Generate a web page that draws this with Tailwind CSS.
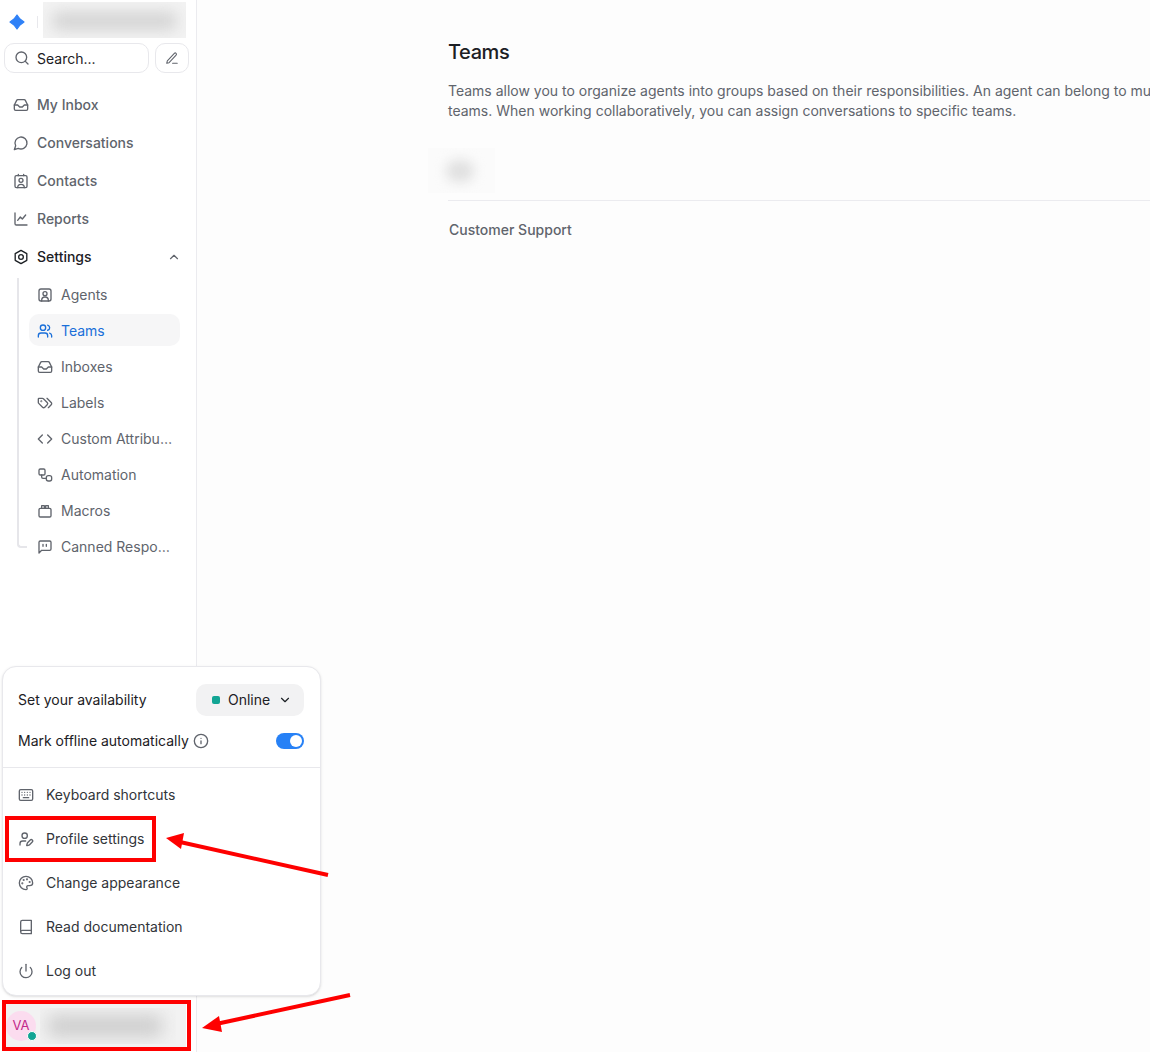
<!DOCTYPE html>
<html lang="en">
<head>
    <meta charset="UTF-8">
    <title>Teams</title>
    <script src="https://cdn.jsdelivr.net/npm/@tailwindcss/browser@4"></script>
</head>
<body class="bg-[#fdfdfd] font-['Inter',sans-serif]">
    <div class="relative flex w-[1150px] h-[1052px] overflow-hidden">
        <!-- sidebar -->
        <aside class="w-[197px] shrink-0 h-full bg-white border-r border-[#ebebef] flex flex-col">
            <div class="flex items-center h-[38px] pt-px pl-[9px]">
                <svg class="w-4 h-4 mt-[5px] text-[#2f81f7]" viewBox="0 0 16 16" fill="currentColor"><path d="M8 1 11 5 15 8 11 11 8 15 5 11 1 8 5 5Z" stroke="currentColor" stroke-width="1.2" stroke-linejoin="round"/></svg>
                <div class="w-px h-[12px] mt-[5px] bg-[#e8e8ec] ml-[12px]"></div>
                <div class="ml-[5px] w-[143px] h-[36px] bg-[#f3f3f3] overflow-hidden">
                    <div class="mt-[11px] mx-[10px] h-[16px] bg-[#cfcfcf] blur-[8px]"></div>
                </div>
            </div>
            <div class="flex gap-[6px] ml-1 mt-[5px]">
                <div class="w-[145px] h-[30px] border border-[#e8e8ec] rounded-[10px] flex items-center pl-[9px] gap-[7px] text-sm text-[#1c2024]">
                    <svg class="w-4 h-4 text-[#60646c]" viewBox="0 0 24 24" fill="none" stroke="currentColor" stroke-width="2" stroke-linecap="round"><circle cx="11" cy="11" r="8"/><path d="m21 21-4.3-4.3"/></svg>
                    <span class="mt-px">Search...</span>
                </div>
                <div class="w-[34px] h-[30px] border border-[#e8e8ec] rounded-[10px] flex items-center justify-center">
                    <svg class="w-[14px] h-[14px] text-[#60646c]" viewBox="0 0 24 24" fill="none" stroke="currentColor" stroke-width="1.8" stroke-linecap="round" stroke-linejoin="round"><path d="M4 17 16 4a2.1 2.1 0 0 1 3 3L7 20l-4 1z"/><path d="M13 21h8"/></svg>
                </div>
            </div>
            <nav class="mt-[13px] text-sm font-medium text-[#60646c]">
                <div class="h-[38px] flex items-center pl-[13px] gap-[8px]">
                    <svg class="w-4 h-4" viewBox="0 0 24 24" fill="none" stroke="currentColor" stroke-width="2" stroke-linecap="round" stroke-linejoin="round"><path d="m2 12 3.5-6.9A2 2 0 0 1 7.2 4h9.6a2 2 0 0 1 1.7 1.1L22 12v6a2 2 0 0 1-2 2H4a2 2 0 0 1-2-2z"/><path d="M2 12h5l3 3h4l3-3h5"/></svg>
                    My Inbox
                </div>
                <div class="h-[38px] flex items-center pl-[13px] gap-[8px]">
                    <svg class="w-4 h-4" viewBox="0 0 24 24" fill="none" stroke="currentColor" stroke-width="2" stroke-linecap="round" stroke-linejoin="round"><path d="M7.9 20A9 9 0 1 0 4 16.1L2 22Z"/></svg>
                    Conversations
                </div>
                <div class="h-[38px] flex items-center pl-[13px] gap-[8px]">
                    <svg class="w-4 h-4" viewBox="0 0 24 24" fill="none" stroke="currentColor" stroke-width="2" stroke-linecap="round" stroke-linejoin="round"><rect x="3" y="4" width="18" height="18" rx="2"/><path d="M8 2v2M16 2v2"/><circle cx="12" cy="11" r="3"/><path d="M7 22c0-3 2-5 5-5s5 2 5 5"/></svg>
                    Contacts
                </div>
                <div class="h-[38px] flex items-center pl-[13px] gap-[8px]">
                    <svg class="w-4 h-4" viewBox="0 0 24 24" fill="none" stroke="currentColor" stroke-width="2" stroke-linecap="round" stroke-linejoin="round"><path d="M3 3v16a2 2 0 0 0 2 2h16"/><path d="m7 14 4-5 3 3 5-6"/></svg>
                    Reports
                </div>
                <div class="h-[38px] flex items-center pl-[13px] gap-[8px] text-[#1c2024]">
                    <svg class="w-4 h-4" viewBox="0 0 24 24" fill="none" stroke="currentColor" stroke-width="2" stroke-linejoin="round"><path d="M12 2l8.7 5v10L12 22l-8.7-5V7z"/><circle cx="12" cy="12" r="3.5"/></svg>
                    Settings
                    <svg class="w-[14px] h-[14px] ml-auto mr-[15px] text-[#60646c]" viewBox="0 0 24 24" fill="none" stroke="currentColor" stroke-width="2" stroke-linecap="round" stroke-linejoin="round"><path d="m6 15 6-6 6 6"/></svg>
                </div>
                <!-- settings children -->
                <div class="relative mt-px font-normal">
                    <div class="absolute left-[17px] top-[1px] h-[270px] w-[10px] border-l-2 border-b-2 border-[#e6e6ea] rounded-bl-[4px]"></div>
                    <div class="h-[36px] flex items-center pl-[37px] gap-[8px]">
                        <svg class="w-4 h-4" viewBox="0 0 24 24" fill="none" stroke="currentColor" stroke-width="2" stroke-linecap="round" stroke-linejoin="round"><rect x="3" y="3" width="18" height="18" rx="3"/><circle cx="12" cy="10" r="3"/><path d="M7 21v-1a5 5 0 0 1 10 0v1"/></svg>
                        Agents
                    </div>
                    <div class="h-[36px] pt-px pl-[29px] pr-[16px]">
                        <div class="h-[32px] pt-[2px] rounded-[10px] bg-[#f6f6f7] text-[#1a6fd9] flex items-center pl-[8px] gap-[8px]">
                            <svg class="w-4 h-4" viewBox="0 0 24 24" fill="none" stroke="currentColor" stroke-width="2" stroke-linecap="round" stroke-linejoin="round"><path d="M16 21v-2a4 4 0 0 0-4-4H6a4 4 0 0 0-4 4v2"/><circle cx="9" cy="7" r="4"/><path d="M22 21v-2a4 4 0 0 0-3-3.87"/><path d="M16 3.13a4 4 0 0 1 0 7.75"/></svg>
                            Teams
                        </div>
                    </div>
                    <div class="h-[36px] flex items-center pl-[37px] gap-[8px]">
                        <svg class="w-4 h-4" viewBox="0 0 24 24" fill="none" stroke="currentColor" stroke-width="2" stroke-linecap="round" stroke-linejoin="round"><path d="m2 12 3.5-6.9A2 2 0 0 1 7.2 4h9.6a2 2 0 0 1 1.7 1.1L22 12v6a2 2 0 0 1-2 2H4a2 2 0 0 1-2-2z"/><path d="M2 12h5l3 3h4l3-3h5"/></svg>
                        Inboxes
                    </div>
                    <div class="h-[36px] flex items-center pl-[37px] gap-[8px]">
                        <svg class="w-4 h-4" viewBox="0 0 24 24" fill="none" stroke="currentColor" stroke-width="2" stroke-linecap="round" stroke-linejoin="round"><path d="m15 5 6.3 6.3a2.4 2.4 0 0 1 0 3.4L17 19"/><path d="M9.586 5.586A2 2 0 0 0 8.172 5H3a1 1 0 0 0-1 1v5.172a2 2 0 0 0 .586 1.414L8.29 18.29a2.426 2.426 0 0 0 3.42 0l3.58-3.58a2.426 2.426 0 0 0 0-3.42z"/><circle cx="6.5" cy="9.5" r=".5"/></svg>
                        Labels
                    </div>
                    <div class="h-[36px] flex items-center pl-[37px] gap-[8px]">
                        <svg class="w-4 h-4" viewBox="0 0 24 24" fill="none" stroke="currentColor" stroke-width="2" stroke-linecap="round" stroke-linejoin="round"><path d="m16 18 6-6-6-6"/><path d="m8 6-6 6 6 6"/></svg>
                        <span class="w-[112px] truncate">Custom Attributes</span>
                    </div>
                    <div class="h-[36px] flex items-center pl-[37px] gap-[8px]">
                        <svg class="w-4 h-4" viewBox="0 0 24 24" fill="none" stroke="currentColor" stroke-width="2" stroke-linecap="round" stroke-linejoin="round"><rect x="3" y="3" width="9" height="9" rx="2"/><rect x="14" y="13" width="8" height="8" rx="3"/><path d="M7 12v3a2 2 0 0 0 2 2h5"/></svg>
                        Automation
                    </div>
                    <div class="h-[36px] flex items-center pl-[37px] gap-[8px]">
                        <svg class="w-4 h-4" viewBox="0 0 24 24" fill="none" stroke="currentColor" stroke-width="2" stroke-linecap="round" stroke-linejoin="round"><rect x="3" y="8" width="18" height="13" rx="2"/><path d="M7 8V4h4v4M13 8V4h4v4"/></svg>
                        Macros
                    </div>
                    <div class="h-[36px] flex items-center pl-[37px] gap-[8px]">
                        <svg class="w-4 h-4" viewBox="0 0 24 24" fill="none" stroke="currentColor" stroke-width="2" stroke-linecap="round" stroke-linejoin="round"><path d="M21 15a2 2 0 0 1-2 2H7l-4 4V5a2 2 0 0 1 2-2h14a2 2 0 0 1 2 2z"/><path d="M9 8v3M14 8v3"/></svg>
                        <span class="w-[112px] truncate">Canned Responses</span>
                    </div>
                </div>
            </nav>
            <!-- account row -->
            <div class="mt-auto mb-[5px] ml-[6px] w-[180px] h-[43px] bg-[#f2f2f2] flex items-center">
                <div class="relative w-[30px] h-[30px] rounded-full bg-[#fbdcef] text-[#c2298a] text-[13px] flex items-center justify-center">
                    VA
                    <span class="absolute -right-[1px] bottom-0 w-[10px] h-[10px] rounded-full bg-[#12a594] border border-white"></span>
                </div>
                <div class="ml-[4px] w-[136px] h-[36px] overflow-hidden">
                    <div class="mt-[8px] ml-[8px] mr-[14px] h-[20px] bg-[#cacaca] blur-[9px]"></div>
                </div>
            </div>
        </aside>

        <!-- main content -->
        <main class="flex-1 min-w-0 pl-[251px] pt-[40px]">
            <h1 class="text-xl font-medium tracking-[-0.4px] leading-[24px] text-[#1c2024]">Teams</h1>
            <p class="mt-[17px] text-sm leading-[20px] text-[#60646c] whitespace-nowrap">Teams allow you to organize agents into groups based on their responsibilities. An agent can belong to multiple<br>teams. When working collaboratively, you can assign conversations to specific teams.</p>
            <div class="-ml-[20px] mt-[27px] w-[67px] h-[45px] bg-[#fbfbfb] overflow-hidden">
                <div class="mt-[12px] ml-[18px] w-[28px] h-[22px] rounded-full bg-[#e0e0e0] blur-[6px]"></div>
            </div>
            <div class="mt-[7px] border-t border-[#ebebef]"></div>
            <div class="mt-[19px] ml-px text-sm font-medium leading-[20px] text-[#60646c]">Customer Support</div>
        </main>

        <!-- availability menu -->
        <div class="absolute left-[2px] top-[666px] w-[319px] h-[330px] bg-white border border-[#e8e8ec] rounded-[14px] shadow-sm text-sm text-[#1c2024]">
            <div class="h-[101px] border-b border-[#e8e8ec] pl-[15px] pr-[16px] pt-[17px]">
                <div class="flex items-center justify-between h-[32px]">
                    <span>Set your availability</span>
                    <div class="w-[108px] h-[32px] rounded-[10px] bg-[#f2f2f3] flex items-center pl-[16px]">
                        <span class="w-2 h-2 rounded-[2px] bg-[#12a594]"></span>
                        <span class="ml-[8px]">Online</span>
                        <svg class="w-[14px] h-[14px] ml-[8px]" viewBox="0 0 24 24" fill="none" stroke="currentColor" stroke-width="2" stroke-linecap="round" stroke-linejoin="round"><path d="m6 9 6 6 6-6"/></svg>
                    </div>
                </div>
                <div class="flex items-center h-[20px] mt-[15px]">
                    <span>Mark offline automatically</span>
                    <svg class="w-4 h-4 ml-[4px] text-[#60646c]" viewBox="0 0 24 24" fill="none" stroke="currentColor" stroke-width="2" stroke-linecap="round" stroke-linejoin="round"><circle cx="12" cy="12" r="10"/><path d="M12 16v-4M12 8h.01"/></svg>
                    <div class="ml-auto w-[28px] h-[16px] rounded-full bg-[#2781f6] flex items-center justify-end pr-[2px]">
                        <span class="w-[12px] h-[12px] rounded-full bg-white"></span>
                    </div>
                </div>
            </div>
            <div class="pt-[5px] text-[#32353a]">
                <div class="h-[44px] flex items-center pl-[15px] gap-[12px]">
                    <svg class="w-4 h-4 text-[#60646c]" viewBox="0 0 24 24" fill="none" stroke="currentColor" stroke-width="2" stroke-linecap="round" stroke-linejoin="round"><rect x="2" y="4" width="20" height="16" rx="2"/><path d="M6 8h.01M10 8h.01M14 8h.01M18 8h.01M6 12h.01M10 12h.01M14 12h.01M18 12h.01M8 16h8"/></svg>
                    Keyboard shortcuts
                </div>
                <div class="h-[44px] flex items-center pl-[15px] gap-[12px]">
                    <svg class="w-4 h-4 text-[#60646c]" viewBox="0 0 24 24" fill="none" stroke="currentColor" stroke-width="2" stroke-linecap="round" stroke-linejoin="round"><path d="M11.5 15H7a4 4 0 0 0-4 4v2"/><path d="M21.378 16.626a1 1 0 0 0-3.004-3.004l-4.01 4.012a2 2 0 0 0-.506.854l-.837 2.87a.5.5 0 0 0 .62.62l2.87-.837a2 2 0 0 0 .854-.506z"/><circle cx="10" cy="7" r="4"/></svg>
                    Profile settings
                </div>
                <div class="h-[44px] flex items-center pl-[15px] gap-[12px]">
                    <svg class="w-4 h-4 text-[#60646c]" viewBox="0 0 24 24" fill="none" stroke="currentColor" stroke-width="2" stroke-linecap="round" stroke-linejoin="round"><path d="M12 22a10 10 0 1 1 10-10c0 2.8-2.2 4-4.5 4H15a2 2 0 0 0-1.5 3.3c.6.8.2 2.7-1.5 2.7z"/><circle cx="13.5" cy="6.5" r=".6" fill="currentColor"/><circle cx="17.5" cy="10.5" r=".6" fill="currentColor"/><circle cx="6.5" cy="12.5" r=".6" fill="currentColor"/><circle cx="8.5" cy="7.5" r=".6" fill="currentColor"/></svg>
                    Change appearance
                </div>
                <div class="h-[44px] flex items-center pl-[15px] gap-[12px]">
                    <svg class="w-4 h-4 text-[#60646c]" viewBox="0 0 24 24" fill="none" stroke="currentColor" stroke-width="2" stroke-linecap="round" stroke-linejoin="round"><path d="M4 19.5v-15A2.5 2.5 0 0 1 6.5 2H20v20H6.5a2.5 2.5 0 0 1 0-5H20"/></svg>
                    Read documentation
                </div>
                <div class="h-[44px] flex items-center pl-[15px] gap-[12px]">
                    <svg class="w-4 h-4 text-[#60646c]" viewBox="0 0 24 24" fill="none" stroke="currentColor" stroke-width="2" stroke-linecap="round" stroke-linejoin="round"><path d="M12 2v10"/><path d="M18.4 6.6a9 9 0 1 1-12.77.04"/></svg>
                    Log out
                </div>
            </div>
        </div>

        <!-- red annotations -->
        <div class="absolute left-[5px] top-[816px] w-[151px] h-[46px] border-[4px] border-[#fe0000]"></div>
        <div class="absolute left-[2px] top-[1000px] w-[189px] h-[51px] border-[4px] border-[#fe0000]"></div>
        <svg class="absolute left-0 top-0 w-[1150px] h-[1052px] pointer-events-none" viewBox="0 0 1150 1052" fill="#fe0000" stroke="#fe0000">
            <path d="M328 875 180 842" fill="none" stroke-width="4"/>
            <path d="M166 838 184 833 181 849Z" stroke="none"/>
            <path d="M350 995 216 1024" fill="none" stroke-width="4"/>
            <path d="M202 1028 219 1016 222 1032Z" stroke="none"/>
        </svg>
    </div>
</body>
</html>
